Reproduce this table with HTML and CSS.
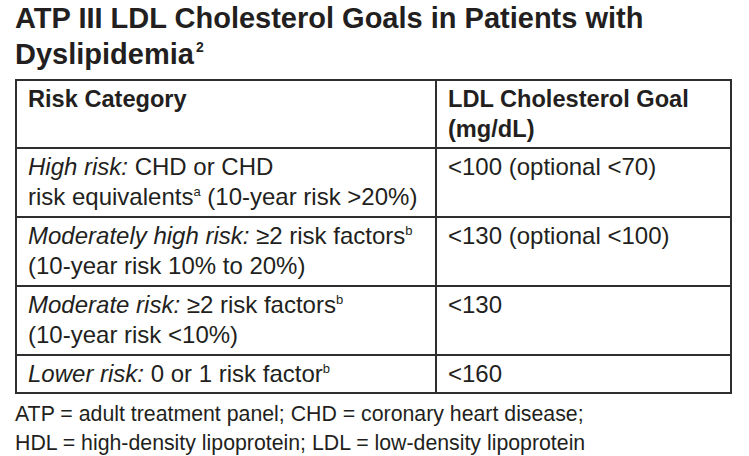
FILE: index.html
```html
<!DOCTYPE html>
<html>
<head>
<meta charset="utf-8">
<link rel="stylesheet" href="styles.css">
</head>
<body>
<div class="page">
  <h1 class="title">ATP III LDL Cholesterol Goals in Patients with Dyslipidemia<sup class="title-sup">2</sup></h1>
  <table class="goals">
    <colgroup>
      <col class="col-risk">
      <col class="col-goal">
    </colgroup>
    <thead>
      <tr>
        <th>Risk Category</th>
        <th>LDL Cholesterol Goal (mg/dL)</th>
      </tr>
    </thead>
    <tbody>
      <tr>
        <td><em>High risk:</em> CHD or CHD<br>risk equivalents<sup>a</sup> (10-year risk &gt;20%)</td>
        <td>&lt;100 (optional &lt;70)</td>
      </tr>
      <tr>
        <td><em>Moderately high risk:</em> ≥2 risk factors<sup>b</sup><br>(10-year risk 10% to 20%)</td>
        <td>&lt;130 (optional &lt;100)</td>
      </tr>
      <tr>
        <td><em>Moderate risk:</em> ≥2 risk factors<sup>b</sup><br>(10-year risk &lt;10%)</td>
        <td>&lt;130</td>
      </tr>
      <tr class="single">
        <td><em>Lower risk:</em> 0 or 1 risk factor<sup>b</sup></td>
        <td>&lt;160</td>
      </tr>
    </tbody>
  </table>
  <p class="note">ATP = adult treatment panel; CHD = coronary heart disease;<br>HDL = high-density lipoprotein; LDL = low-density lipoprotein</p>
</div>
</body>
</html>
```
FILE: styles.css
```css
html, body {
  margin: 0;
  padding: 0;
  background: #ffffff;
}
body {
  font-family: "Liberation Sans", Arial, sans-serif;
  color: #231f20;
}
.page {
  padding: 0 0 0 15px;
  width: 717px;
}
.title {
  margin: 0;
  font-size: 29px;
  line-height: 36px;
  font-weight: bold;
  letter-spacing: 0;
  width: 700px;
}
.title-sup {
  font-size: 14px;
  line-height: 0;
  vertical-align: 12px;
  margin-left: 2px;
}
.goals {
  margin-top: 7px;
  width: 717px;
  border-collapse: collapse;
  table-layout: fixed;
  border: 2px solid #2e2e2e;
}
.col-risk {
  width: 420px;
}
.goals th,
.goals td {
  border: 2px solid #2e2e2e;
  text-align: left;
  vertical-align: top;
  font-size: 24px;
  line-height: 30px;
  padding: 3px 6px 4px 11px;
  white-space: nowrap;
}
.goals th {
  font-weight: bold;
  font-size: 23.6px;
  padding-bottom: 3px;
  white-space: normal;
  padding-right: 20px;
}
.goals td {
  font-weight: normal;
}
.goals .single td {
  padding-bottom: 3px;
}
.goals em {
  font-style: italic;
}
.goals sup {
  font-size: 13px;
  line-height: 0;
  vertical-align: 9px;
}
.note {
  margin: 6px 0 0;
  font-size: 21.3px;
  line-height: 29px;
}
```
